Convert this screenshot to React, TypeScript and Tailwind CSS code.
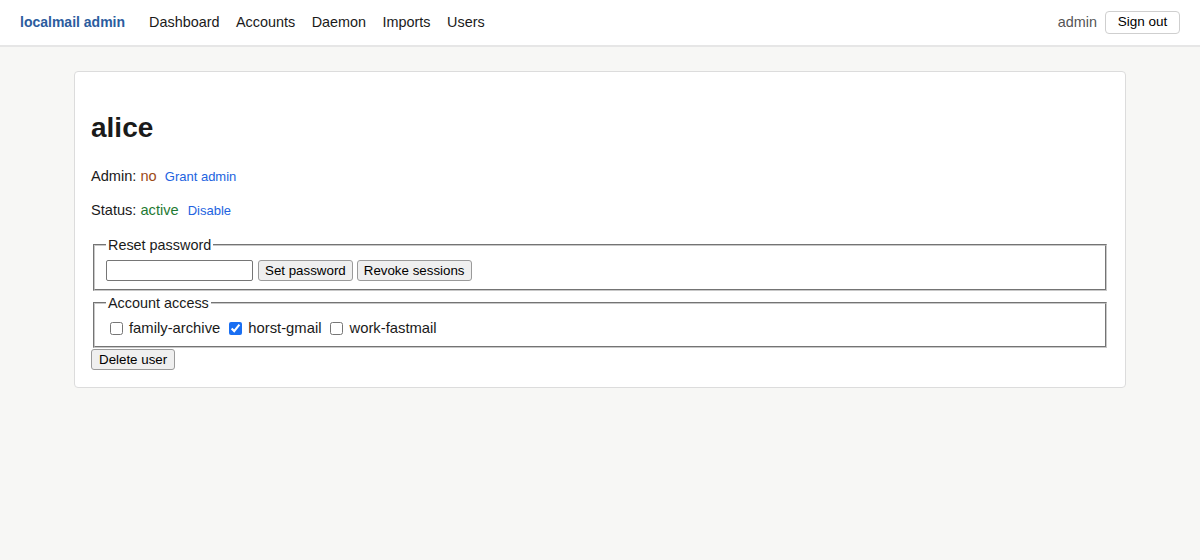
import { useState } from "react";

const navLinks = ["Dashboard", "Accounts", "Daemon", "Imports", "Users"];

const accounts = [
  { key: "family-archive", checked: false },
  { key: "horst-gmail", checked: true },
  { key: "work-fastmail", checked: false },
];

const btn =
  "h-[21px] px-[6px] bg-[#efefef] border border-[#9a9a9a] rounded-[3px] text-[13.33px] leading-[15px] text-black";

export default function App() {
  const [access, setAccess] = useState(accounts);
  const [password, setPassword] = useState("");

  const toggle = (key: string) =>
    setAccess(prev => prev.map(a => (a.key === key ? { ...a, checked: !a.checked } : a)));

  return (
    <div className="min-h-[560px] bg-[#f7f7f5] text-[#1a1a1a] font-['Liberation_Sans',Arial,sans-serif] text-[14.4px]">
      {/* Top bar */}
      <header className="h-[47px] bg-white border-b-2 border-[#e6e6e6] flex items-center px-5">
        <span className="font-bold text-[14px] text-[#2b5c9e]">localmail admin</span>
        <nav className="flex items-center gap-[16.5px] ml-6">
          {navLinks.map(l => (
            <a key={l} href="#" className="text-[#1a1a1a]">
              {l}
            </a>
          ))}
        </nav>
        <div className="flex-1" />
        <span className="text-[#555]">admin</span>
        <button className="ml-2 h-[23px] w-[75px] bg-white border border-[#cfcfcf] rounded-[4px] text-[13.5px] text-black">
          Sign out
        </button>
      </header>

      <main className="max-w-[1100px] mx-auto px-6 pt-[24px]">
        <div className="bg-white border border-[#dcdcdc] rounded-[4px] px-4 pt-4 pb-[16px]">
          <h1 className="text-[28px] font-bold leading-[32px] mt-[24px] mb-[22px]">alice</h1>

          <p className="leading-5 text-[14.6px]">
            Admin: <span className="text-[#9c4a16]">no</span>{" "}
            <button className="ml-[4px] text-[13px] leading-4 text-[#2263e0]">Grant admin</button>
          </p>
          <p className="leading-5 text-[14.6px] mt-[14px]">
            Status: <span className="text-[#1f7a33]">active</span>{" "}
            <button className="ml-[5px] text-[13px] leading-4 text-[#2263e0]">Disable</button>
          </p>

          <fieldset className="mt-[17px] mx-[2px] border-2 [border-style:groove] border-[#c8c8c8] px-[11px] pt-[7px] pb-[8px]">
            <legend className="px-[2px] leading-[16px]">Reset password</legend>
            <div className="flex items-center h-[21px]">
              <input
                type="password"
                value={password}
                onChange={e => setPassword(e.target.value)}
                className="h-[21px] w-[147px] border border-[#767676] rounded-[2px] px-[2px] text-[13.33px] bg-white"
              />
              <button className={`${btn} ml-[5px]`}>Set password</button>
              <button className={`${btn} ml-[4px] px-[6.5px]`}>Revoke sessions</button>
            </div>
          </fieldset>

          <fieldset className="mt-[4px] mx-[2px] border-2 [border-style:groove] border-[#c8c8c8] px-[11px] pt-[6px] pb-[7px]">
            <legend className="px-[2px] leading-[16px]">Account access</legend>
            <div className="flex items-center h-[22px] text-[14.8px]">
              {access.map(a => (
                <label key={a.key} className="flex items-center mr-[5px]">
                  <input
                    type="checkbox"
                    checked={a.checked}
                    onChange={() => toggle(a.key)}
                    className="w-[13px] h-[13px] ml-[4px] mr-[6px] accent-[#1a6ff2]"
                  />
                  {a.key}
                </label>
              ))}
            </div>
          </fieldset>

          <button className={`${btn} mt-[1px] px-[7px]`}>Delete user</button>
        </div>
      </main>
    </div>
  );
}
